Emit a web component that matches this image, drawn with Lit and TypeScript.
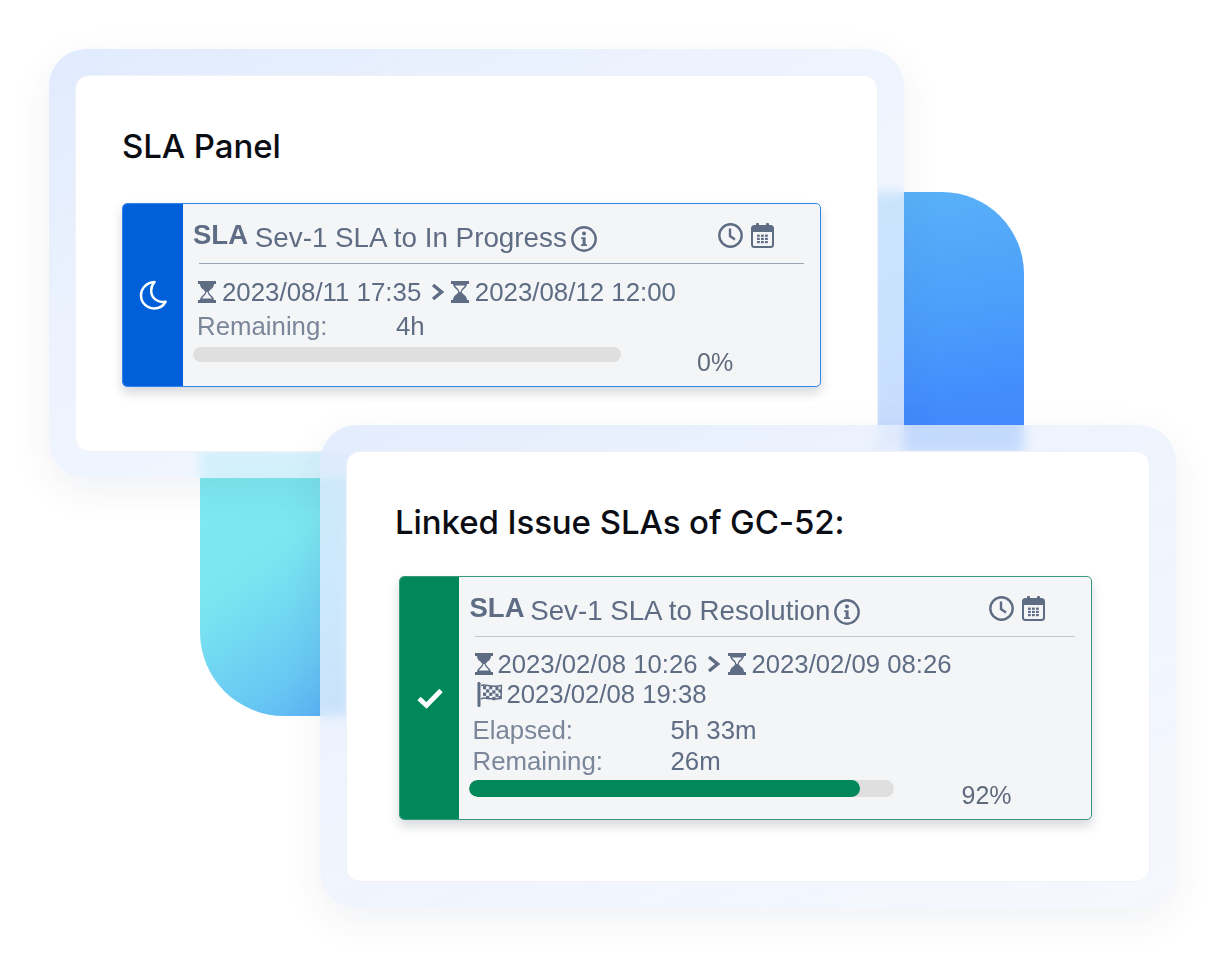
import { LitElement, html, css, svg } from "lit";
import { customElement, property } from "lit/decorators.js";

const hourglass = (flip: boolean) => html`<svg class="hg" viewBox="0 0 18 22" width="18" height="22" aria-hidden="true">
  <g fill="#5e6c84" stroke="none" transform="${flip ? "rotate(180 9 11)" : ""}">
    <rect x="0" y="0" width="18" height="3"></rect>
    <rect x="0" y="19" width="18" height="3"></rect>
    <path d="M2 3H16C16 7.5 11.6 8.6 10.6 11H7.4C6.4 8.6 2 7.5 2 3Z"></path>
    <path d="M7.2 11C6.6 14 2.2 15 2 19H16C15.8 15 11.4 14 10.8 11H9.6C10 14.6 13.4 15.4 13.8 17.4H4.2C4.6 15.4 8 14.6 8.4 11Z"></path>
  </g>
</svg>`;

const chevron = html`<svg class="chev" viewBox="0 0 13 18" width="13" height="18" aria-hidden="true"><path d="M2 2L10.5 9L2 16" fill="none" stroke="#5e6c84" stroke-width="3.4"></path></svg>`;

const flagCells = () => {
  const out = [];
  for (let r = 0; r < 4; r++) {
    for (let c = 0; c < 6; c++) {
      if ((r + c) % 2 === 0) {
        out.push(svg`<rect x="${6 + c * 3.1}" y="${4 + r * 3.3 + (c > 2 ? 1 : 0) - (c > 4 ? 1 : 0)}" width="3.1" height="3.3"></rect>`);
      }
    }
  }
  return out;
};
const flag = html`<svg class="flag" viewBox="0 0 25 25" width="25" height="25" aria-hidden="true">
  <g fill="#5e6c84">
    <rect x="0.5" y="0" width="3" height="25" rx="1.2"></rect>
    ${flagCells()}
  </g>
  <path d="M4 3.5C9 1.5 13 6 24.5 3.5L24 16C14 19 9 14 4 17" fill="none" stroke="#5e6c84" stroke-width="1.5"></path>
</svg>`;

const info = html`<svg class="info" viewBox="0 0 26 26" width="26" height="26" aria-hidden="true">
  <circle cx="13" cy="13" r="11.7" fill="none" stroke="#5e6c84" stroke-width="2.4"></circle>
  <circle cx="13" cy="7.6" r="2" fill="#5e6c84"></circle>
  <path d="M10.2 11.2H14.6V18.2H16V20H10V18.2H11.6V13H10.2Z" fill="#5e6c84"></path>
</svg>`;

const clock = html`<svg viewBox="0 0 25 25" width="25" height="25" aria-hidden="true">
  <circle cx="12.5" cy="12.5" r="11.2" fill="none" stroke="#5e6c84" stroke-width="2.4"></circle>
  <path d="M12 5.6V13L17 16.4" fill="none" stroke="#5e6c84" stroke-width="2.4"></path>
</svg>`;

const cells = () => {
  const out = [];
  for (let r = 0; r < 3; r++) {
    for (let c = 0; c < 3; c++) {
      out.push(svg`<rect x="${6 + c * 4}" y="${11.6 + r * 3.2}" width="2.8" height="2.2" fill="#5e6c84"></rect>`);
    }
  }
  return out;
};
const calendar = html`<svg viewBox="0 0 23 25" width="23" height="25" aria-hidden="true">
  <rect x="1" y="3" width="21" height="21" rx="2.5" fill="none" stroke="#5e6c84" stroke-width="2"></rect>
  <path d="M1 5.5a2.5 2.5 0 0 1 2.5-2.5h16a2.5 2.5 0 0 1 2.5 2.5V9H1Z" fill="#5e6c84"></path>
  <rect x="5" y="0" width="3" height="5" rx="1" fill="#5e6c84"></rect>
  <rect x="15" y="0" width="3" height="5" rx="1" fill="#5e6c84"></rect>
  ${cells()}
</svg>`;

const moon = html`<svg viewBox="0 0 28 30" width="28" height="30" aria-hidden="true">
  <path d="M15.5 2C8 2.4 2 8 2 15.4C2 22.8 8 28.4 15 28.4C20.4 28.4 24.6 25.6 26.6 21.6C20.6 23 13.6 19.4 12.4 13C11.6 8.4 13.2 4.6 15.5 2Z" fill="none" stroke="#fff" stroke-width="2.5" stroke-linejoin="round"></path>
</svg>`;

const check = html`<svg viewBox="0 0 28 22" width="28" height="22" aria-hidden="true">
  <path d="M3 11.5L10.5 18.5L25 3.5" fill="none" stroke="#fff" stroke-width="4.8"></path>
</svg>`;

@customElement("sla-card")
class SlaCard extends LitElement {
  @property() tone = "blue";
  @property() name = "";
  @property() start = "";
  @property() end = "";
  @property() finished = "";
  @property() elapsed = "";
  @property() remaining = "";
  @property({ type: Number }) percent = 0;

  static styles = css`
    :host { display: block; }
    .card {
      display: flex;
      border: 1px solid #2f86ea;
      border-radius: 5px;
      background: #f4f5f7;
      box-shadow: 0 6px 11px rgba(30, 40, 60, 0.18);
      font-family: "Liberation Sans", Arial, sans-serif;
      color: #5e6c84;
      overflow: hidden;
      filter: blur(0.45px);
    }
    .card.green { border-color: #36997a; }
    .side {
      flex: 0 0 60px;
      display: flex;
      align-items: center;
      justify-content: center;
      background: #0060d9;
    }
    .green .side { background: #00875a; flex-basis: 59px; }
    .body { flex: 1; min-width: 0; padding-bottom: 9px; }
    .head {
      height: 59px;
      box-sizing: border-box;
      padding: 14.5px 46px 0 10px;
      display: flex;
      align-items: flex-start;
    }
    .green .head { padding-left: 10.5px; }
    .title { font-size: 27.8px; line-height: 32px; white-space: nowrap; }
    .title b { font-size: 27.5px; font-weight: 700; vertical-align: 3px; margin-right: -1px; }
    .green .title { font-size: 27.7px; }
    .green .title b { margin-right: -2px; }
    .info { margin: 7.5px 0 0 4px; flex: none; }
    .tools { margin-left: auto; display: flex; gap: 8px; margin-top: 4.5px; }
    .rule { height: 1px; margin: 0 16px; background: #9aa5b5; }
    .green .rule { background: #c1c7d0; }
    .dates { margin-top: 13px; }
    .green .dates { margin-top: 12px; }
    .date-row {
      display: flex;
      align-items: center;
      height: 30px;
      padding-left: 15px;
      font-size: 25.85px;
      white-space: nowrap;
    }
    .green .date-row { font-size: 25.7px; padding-left: 15.5px; }
    .date-row span { margin-left: 6px; }
    .green .date-row span { margin-left: 5px; }
    .chev { margin: 0 6.5px 0 10px; }
    .green .chev { margin-right: 8px; }
    .date-row.finish { padding-left: 17.5px; }
    .meta { margin-top: 4px; }
    .green .meta { margin-top: 6px; }
    .meta-row {
      display: grid;
      grid-template-columns: 199px 1fr;
      padding-left: 14px;
      font-size: 25.8px;
      line-height: 31px;
    }
    .green .meta-row { grid-template-columns: 198px 1fr; padding-left: 13.5px; }
    .label { color: #7a869a; }
    .bottom { display: flex; align-items: flex-start; margin: 5px 0 0 10px; }
    .green .bottom { margin: 3px 0 0 9.5px; }
    .track {
      flex: 0 0 428px;
      height: 15px;
      border-radius: 8px;
      background: #dfdfdf;
      overflow: hidden;
    }
    .green .track { flex-basis: 425px; height: 17px; border-radius: 9px; }
    .fill { height: 100%; background: #00875a; border-radius: 9px; }
    .pct { margin-left: 76px; font-size: 25px; line-height: 30px; color: #5f6b7c; }
    .green .pct { margin-left: 68px; }
  `;

  render() {
    const green = this.tone === "green";
    return html`<div class="card ${this.tone}">
      <div class="side">${green ? check : moon}</div>
      <div class="body">
        <div class="head">
          <div class="title"><b>SLA</b> ${this.name}</div>
          ${info}
          <div class="tools">${clock}${calendar}</div>
        </div>
        <div class="rule"></div>
        <div class="dates">
          <div class="date-row">${hourglass(false)}<span>${this.start}</span>${chevron}${hourglass(true)}<span>${this.end}</span></div>
          ${this.finished ? html`<div class="date-row finish">${flag}<span>${this.finished}</span></div>` : ""}
        </div>
        <div class="meta">
          ${this.elapsed ? html`<div class="meta-row"><div class="label">Elapsed:</div><div>${this.elapsed}</div></div>` : ""}
          <div class="meta-row"><div class="label">Remaining:</div><div>${this.remaining}</div></div>
        </div>
        <div class="bottom">
          <div class="track"><div class="fill" style="width:${this.percent}%"></div></div>
          <div class="pct">${this.percent}%</div>
        </div>
      </div>
    </div>`;
  }
}

@customElement("app-root")
class AppRoot extends LitElement {
  static styles = css`
    :host {
      display: block;
      position: relative;
      width: 1224px;
      height: 956px;
      background: #fff;
      overflow: hidden;
      font-family: Inter, "Liberation Sans", sans-serif;
    }
    .blob { position: absolute; }
    .blob-right {
      left: 870px;
      top: 192px;
      width: 154px;
      height: 262px;
      border-top-right-radius: 82px;
      background: linear-gradient(170deg, #5ab2f8 0%, #4d9ffa 45%, #428cfe 78%);
    }
    .blob-left {
      left: 200px;
      top: 448px;
      width: 150px;
      height: 268px;
      border-bottom-left-radius: 84px;
      background: linear-gradient(145deg, #7eeaf0 0%, #7ce6f0 42%, #68c8f3 78%, #58acf5 100%);
    }
    .panel {
      position: absolute;
      box-sizing: border-box;
      padding: 26px;
      border-radius: 37px;
      backdrop-filter: blur(6px);
      box-shadow: 0 12px 40px rgba(45, 55, 100, 0.07);
    }
    .panel-a {
      left: 49px;
      top: 49px;
      width: 855px;
      height: 429px;
      background: linear-gradient(155deg, rgba(218, 231, 253, 0.84) 0%, rgba(232, 240, 254, 0.78) 38%, rgba(243, 247, 254, 0.76) 100%);
    }
    .panel-b {
      left: 320px;
      top: 425px;
      width: 856px;
      height: 483px;
      background: linear-gradient(155deg, rgba(222, 233, 253, 0.82) 0%, rgba(233, 240, 253, 0.78) 38%, rgba(243, 246, 253, 0.82) 100%);
    }
    .sheet {
      height: 100%;
      box-sizing: border-box;
      background: #fff;
      border: 1px solid #f0f2f8;
      border-radius: 14px;
    }
    .panel-a .sheet { padding: 50px 0 0 46px; }
    .panel-b .sheet { padding: 50px 0 0 48px; }
    h2 {
      margin: 0;
      font-size: 33px;
      line-height: 40px;
      font-weight: 500;
      letter-spacing: -0.08px;
      color: #0b0d14;
    }
    .panel-a h2 { margin-bottom: 37px; }
    .panel-b h2 { margin-bottom: 34px; }
    .panel-a sla-card { width: 699px; }
    .panel-b sla-card { width: 693px; margin-left: 4px; }
  `;

  render() {
    return html`
      <div class="blob blob-right"></div>
      <div class="blob blob-left"></div>
      <section class="panel panel-a">
        <div class="sheet">
          <h2>SLA Panel</h2>
          <sla-card tone="blue" name="Sev-1 SLA to In Progress" start="2023/08/11 17:35" end="2023/08/12 12:00" remaining="4h" percent="0"></sla-card>
        </div>
      </section>
      <section class="panel panel-b">
        <div class="sheet">
          <h2>Linked Issue SLAs of GC-52:</h2>
          <sla-card tone="green" name="Sev-1 SLA to Resolution" start="2023/02/08 10:26" end="2023/02/09 08:26" finished="2023/02/08 19:38" elapsed="5h 33m" remaining="26m" percent="92"></sla-card>
        </div>
      </section>
    `;
  }
}
